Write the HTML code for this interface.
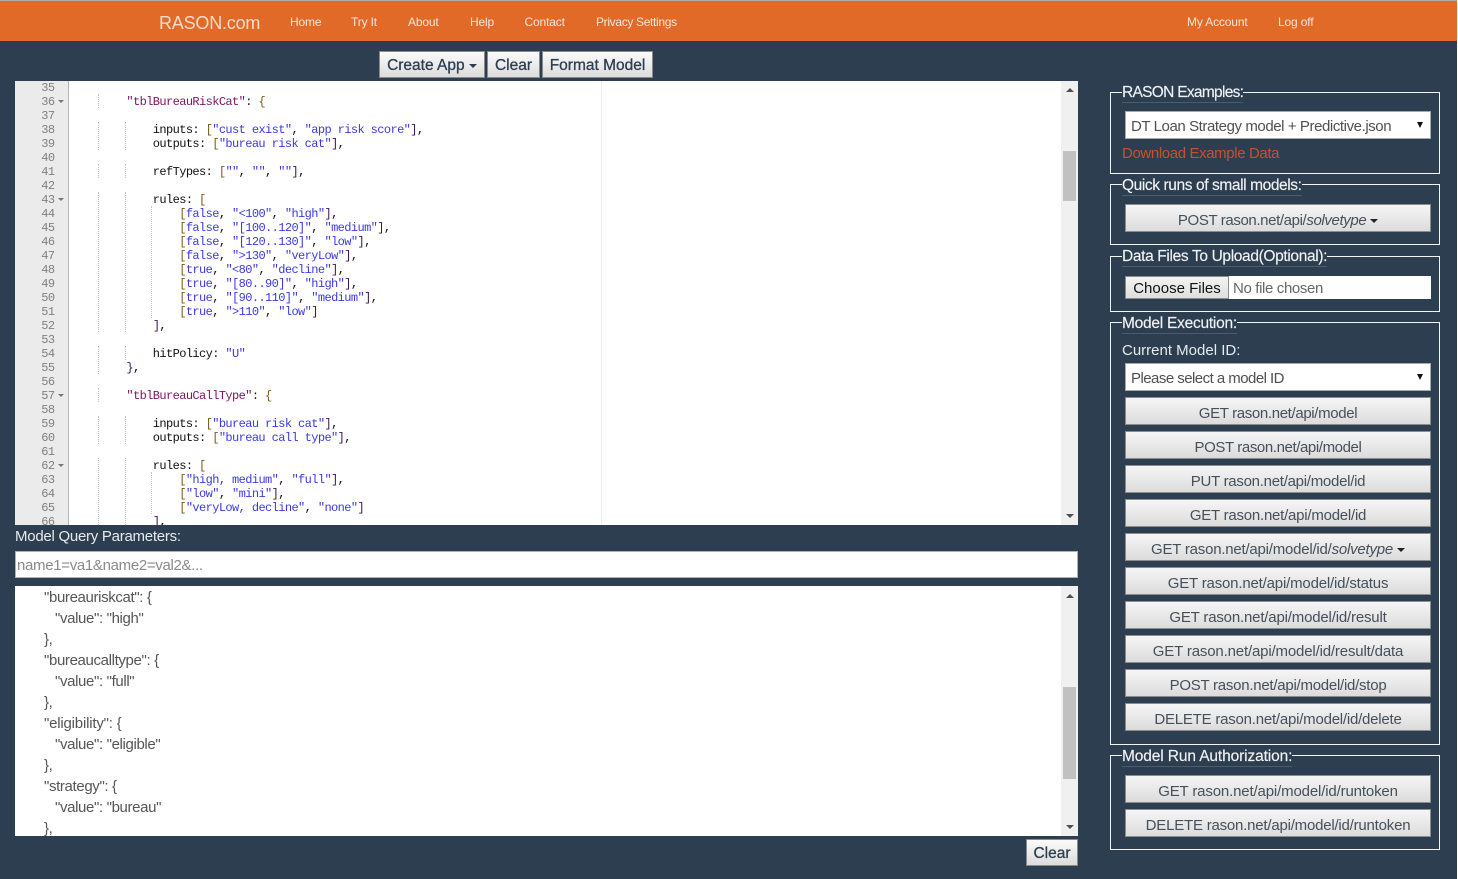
<!DOCTYPE html>
<html><head><meta charset="utf-8"><title>RASON</title>
<style>
*{box-sizing:border-box}
html,body{margin:0;padding:0;width:1458px;height:879px;overflow:hidden;background:#2c3e50;font-family:"Liberation Sans",sans-serif}
.a{position:absolute;white-space:nowrap}
#top{position:absolute;left:0;top:0;width:1458px;height:41px;background:#e26a28;border-top:1px solid #b0aca8}
#strip{position:absolute;left:1457px;top:0;width:1px;height:879px;background:#fff}
.nav{position:absolute;top:15px;font-size:12px;line-height:14px;color:#f7e6da;white-space:nowrap;letter-spacing:-.15px}
.tb{position:absolute;top:51px;height:27px;background:linear-gradient(#fbfbfb,#dcdcdc);border:1px solid #8a8a8a;font-size:15.5px;line-height:27px;text-align:center;color:#2c3e50;-webkit-text-stroke:.3px #2c3e50;white-space:nowrap}
#ed{position:absolute;left:15px;top:81px;width:1063px;height:444px;background:#fff;overflow:hidden}
#gut{position:absolute;left:0;top:0;width:54px;height:444px;background:#ebebeb;border-right:1px solid #b5b5b5}
pre{margin:0;font-family:"Liberation Mono",monospace;font-size:12px;line-height:14px;letter-spacing:-.6px}
#nums{position:absolute;left:0;top:0;width:39.5px;text-align:right;color:#808080}
#code{position:absolute;left:58.6px;top:0;color:#111}
.s{color:#3a3ae0}.k{color:#7a1464}.o{color:#7a5c1a}.c{color:#3a1a50}
.g{position:absolute;width:1px;border-left:1px dotted #c4c4c4}
.f{position:absolute;left:43px;width:0;height:0;border-left:3px solid transparent;border-right:3px solid transparent;border-top:3px solid #777}
.sb{position:absolute;left:1046px;width:17px;background:#f0f0f0}
.th{position:absolute;left:2px;width:13px;background:#c1c1c1}
.up,.dn{position:absolute;left:5px;width:0;height:0;border-left:4px solid transparent;border-right:4px solid transparent}
.up{top:7px;border-bottom:4px solid #505050}.dn{border-top:4px solid #505050}
#out{position:absolute;left:15px;top:586px;width:1063px;height:250px;background:#fff;overflow:hidden;font-size:15px;color:#555;letter-spacing:-.36px}
#out div.l{position:absolute;white-space:nowrap;line-height:21px;transform:translateY(1px)}
.fs{position:absolute;left:1110px;width:330px;border:1px solid #f2f4f5}
.lg{position:absolute;left:1122px;height:22px;background:#2c3e50;color:#f0f2f4;font-size:15.5px;line-height:24px;border-bottom:1px solid #4d5c6b;white-space:nowrap;-webkit-text-stroke:.15px #f0f2f4}
.btn{position:absolute;left:1125px;width:306px;height:28px;background:linear-gradient(#f6f6f6,#dcdcdc);border:1px solid #8c8c8c;color:#46505a;font-size:15px;line-height:32px;text-align:center;white-space:nowrap}
.sel{position:absolute;left:1125px;width:306px;height:28px;background:#fff;border:1px solid #a8a8a8;color:#505050;font-size:15px;line-height:29px;padding-left:5px;white-space:nowrap}
.sel:after{content:"";position:absolute;right:7px;top:10px;border-left:3px solid transparent;border-right:3px solid transparent;border-top:6px solid #111}
.car{display:inline-block;width:0;height:0;border-left:4px solid transparent;border-right:4px solid transparent;border-top:4px solid #222;vertical-align:middle;margin-left:0}
</style></head><body>
<div id="top"></div>
<div class="a" style="left:159px;top:12px;font-size:18px;line-height:22px;color:#f6dccb;letter-spacing:-.2px">RASON.com</div>
<div class="nav" style="left:290px">Home</div>
<div class="nav" style="left:351px">Try It</div>
<div class="nav" style="left:408px">About</div>
<div class="nav" style="left:470px">Help</div>
<div class="nav" style="left:524.5px">Contact</div>
<div class="nav" style="left:596px;letter-spacing:-.33px">Privacy Settings</div>
<div class="nav" style="left:1187px">My Account</div>
<div class="nav" style="left:1278px">Log off</div>

<div class="tb" style="left:379px;width:106px">Create App <span class="car" style="border-top-color:#2c3e50"></span></div>
<div class="tb" style="left:487px;width:53px">Clear</div>
<div class="tb" style="left:542px;width:111px">Format Model</div>

<div id="ed">
<div id="gut"></div>
<pre id="nums">35
36
37
38
39
40
41
42
43
44
45
46
47
48
49
50
51
52
53
54
55
56
57
58
59
60
61
62
63
64
65
66</pre>
<div class="f" style="top:19px"></div><div class="f" style="top:117px"></div><div class="f" style="top:313px"></div><div class="f" style="top:383px"></div>
<div style="position:absolute;left:586px;top:0;width:1px;height:444px;background:#ececec"></div>
<div class="g" style="left:83px;top:13px;height:14px"></div>
<div class="g" style="left:83px;top:41px;height:28px"></div>
<div class="g" style="left:83px;top:83px;height:14px"></div>
<div class="g" style="left:83px;top:111px;height:140px"></div>
<div class="g" style="left:83px;top:265px;height:28px"></div>
<div class="g" style="left:83px;top:307px;height:14px"></div>
<div class="g" style="left:83px;top:335px;height:28px"></div>
<div class="g" style="left:83px;top:377px;height:67px"></div>
<div class="g" style="left:110px;top:41px;height:28px"></div>
<div class="g" style="left:110px;top:83px;height:14px"></div>
<div class="g" style="left:110px;top:111px;height:140px"></div>
<div class="g" style="left:110px;top:265px;height:14px"></div>
<div class="g" style="left:110px;top:335px;height:28px"></div>
<div class="g" style="left:110px;top:377px;height:67px"></div>
<div class="g" style="left:136px;top:125px;height:112px"></div>
<div class="g" style="left:136px;top:391px;height:42px"></div>
<pre id="code">

        <span class="k">"tblBureauRiskCat"</span>: <span class="o">{</span>

            inputs: <span class="o">[</span><span class="s">"cust exist"</span>, <span class="s">"app risk score"</span><span class="c">]</span>,
            outputs: <span class="o">[</span><span class="s">"bureau risk cat"</span><span class="c">]</span>,

            refTypes: <span class="o">[</span><span class="s">""</span>, <span class="s">""</span>, <span class="s">""</span><span class="c">]</span>,

            rules: <span class="o">[</span>
                <span class="o">[</span><span class="s">false</span>, <span class="s">"&lt;100"</span>, <span class="s">"high"</span><span class="c">]</span>,
                <span class="o">[</span><span class="s">false</span>, <span class="s">"[100..120]"</span>, <span class="s">"medium"</span><span class="c">]</span>,
                <span class="o">[</span><span class="s">false</span>, <span class="s">"[120..130]"</span>, <span class="s">"low"</span><span class="c">]</span>,
                <span class="o">[</span><span class="s">false</span>, <span class="s">"&gt;130"</span>, <span class="s">"veryLow"</span><span class="c">]</span>,
                <span class="o">[</span><span class="s">true</span>, <span class="s">"&lt;80"</span>, <span class="s">"decline"</span><span class="c">]</span>,
                <span class="o">[</span><span class="s">true</span>, <span class="s">"[80..90]"</span>, <span class="s">"high"</span><span class="c">]</span>,
                <span class="o">[</span><span class="s">true</span>, <span class="s">"[90..110]"</span>, <span class="s">"medium"</span><span class="c">]</span>,
                <span class="o">[</span><span class="s">true</span>, <span class="s">"&gt;110"</span>, <span class="s">"low"</span><span class="c">]</span>
            <span class="c">]</span>,

            hitPolicy: <span class="s">"U"</span>
        <span class="c">}</span>,

        <span class="k">"tblBureauCallType"</span>: <span class="o">{</span>

            inputs: <span class="o">[</span><span class="s">"bureau risk cat"</span><span class="c">]</span>,
            outputs: <span class="o">[</span><span class="s">"bureau call type"</span><span class="c">]</span>,

            rules: <span class="o">[</span>
                <span class="o">[</span><span class="s">"high, medium"</span>, <span class="s">"full"</span><span class="c">]</span>,
                <span class="o">[</span><span class="s">"low"</span>, <span class="s">"mini"</span><span class="c">]</span>,
                <span class="o">[</span><span class="s">"veryLow, decline"</span>, <span class="s">"none"</span><span class="c">]</span>
            <span class="c">]</span>,</pre>
<div class="sb" style="top:0;height:444px"><div class="up"></div><div class="th" style="top:70px;height:50px"></div><div class="dn" style="top:433px"></div></div>
</div>

<div class="a" style="left:15px;top:528px;font-size:15px;line-height:18px;color:#e6eaee;letter-spacing:-.26px">Model Query Parameters:</div>
<div class="a" style="left:15px;top:551px;width:1063px;height:27px;background:#fff;border:1px solid #b0b0b0;font-size:15px;line-height:27px;color:#8a8a8a;padding-left:1px;letter-spacing:-.32px">name1=va1&amp;name2=val2&amp;...</div>

<div id="out">
<div class="l" style="left:29px;top:0">"bureauriskcat": {</div>
<div class="l" style="left:40px;top:21px">"value": "high"</div>
<div class="l" style="left:29px;top:42px">},</div>
<div class="l" style="left:29px;top:63px">"bureaucalltype": {</div>
<div class="l" style="left:40px;top:84px">"value": "full"</div>
<div class="l" style="left:29px;top:105px">},</div>
<div class="l" style="left:29px;top:126px;letter-spacing:-.2px">"eligibility": {</div>
<div class="l" style="left:40px;top:147px">"value": "eligible"</div>
<div class="l" style="left:29px;top:168px">},</div>
<div class="l" style="left:29px;top:189px">"strategy": {</div>
<div class="l" style="left:40px;top:210px">"value": "bureau"</div>
<div class="l" style="left:29px;top:231px">},</div>
<div class="sb" style="top:0;height:250px"><div class="up" style="top:8px"></div><div class="th" style="top:101px;height:92px"></div><div class="dn" style="top:239px"></div></div>
</div>

<div class="tb" style="left:1026px;top:839px;width:52px;height:27px">Clear</div>

<div class="fs" style="top:92px;height:82px"></div>
<div class="lg" style="top:81px;letter-spacing:-.7px">RASON Examples:</div>
<div class="sel" style="top:111px;letter-spacing:-.42px">DT Loan Strategy model + Predictive.json</div>
<div class="a" style="left:1122px;top:145px;font-size:15px;line-height:18px;color:#c9502f;letter-spacing:-.38px">Download Example Data</div>

<div class="fs" style="top:184px;height:61px"></div>
<div class="lg" style="top:174px;letter-spacing:-.4px">Quick runs of small models:</div>
<div class="btn" style="top:204px;letter-spacing:-.38px">POST rason.net/api/<i>solvetype</i> <span class="car"></span></div>

<div class="fs" style="top:256px;height:56px"></div>
<div class="lg" style="top:245px;letter-spacing:-.35px">Data Files To Upload(Optional):</div>
<div class="a" style="left:1125px;top:276px;width:306px;height:23px;background:#fff"></div>
<div class="a" style="left:1125px;top:276px;width:104px;height:23px;background:linear-gradient(#f4f4f4,#dedede);border:1px solid #8c8c8c;font-size:15px;line-height:23px;text-align:center;color:#111">Choose Files</div>
<div class="a" style="left:1233px;top:276px;font-size:15px;line-height:26px;color:#666;letter-spacing:-.36px">No file chosen</div>

<div class="fs" style="top:322px;height:423px"></div>
<div class="lg" style="top:312px;letter-spacing:-.25px">Model Execution:</div>
<div class="a" style="left:1122px;top:342px;font-size:15px;line-height:18px;color:#e6eaee">Current Model ID:</div>
<div class="sel" style="top:363px;letter-spacing:-.54px">Please select a model ID</div>
<div class="btn" style="top:397px;letter-spacing:-.35px">GET rason.net/api/model</div>
<div class="btn" style="top:431px;letter-spacing:-.4px">POST rason.net/api/model</div>
<div class="btn" style="top:465px;letter-spacing:-.27px">PUT rason.net/api/model/id</div>
<div class="btn" style="top:499px;letter-spacing:-.23px">GET rason.net/api/model/id</div>
<div class="btn" style="top:533px;letter-spacing:-.22px">GET rason.net/api/model/id/<i>solvetype</i> <span class="car"></span></div>
<div class="btn" style="top:567px;letter-spacing:-.18px">GET rason.net/api/model/id/status</div>
<div class="btn" style="top:601px;letter-spacing:-.18px">GET rason.net/api/model/id/result</div>
<div class="btn" style="top:635px;letter-spacing:-.16px">GET rason.net/api/model/id/result/data</div>
<div class="btn" style="top:669px;letter-spacing:-.25px">POST rason.net/api/model/id/stop</div>
<div class="btn" style="top:703px;letter-spacing:-.22px">DELETE rason.net/api/model/id/delete</div>

<div class="fs" style="top:755px;height:95px"></div>
<div class="lg" style="top:745px;letter-spacing:-.12px">Model Run Authorization:</div>
<div class="btn" style="top:775px;letter-spacing:-.15px">GET rason.net/api/model/id/runtoken</div>
<div class="btn" style="top:809px;letter-spacing:-.21px">DELETE rason.net/api/model/id/runtoken</div>
<div id="strip"></div>
</body></html>
